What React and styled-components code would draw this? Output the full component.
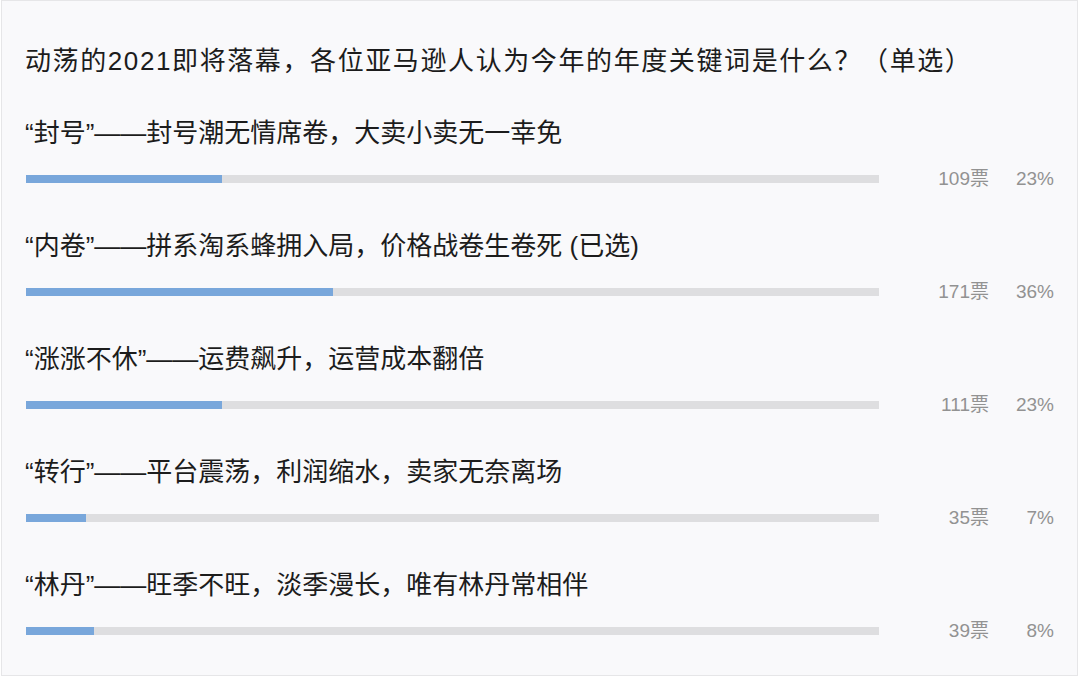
import React from "react";
import styled, { createGlobalStyle } from "styled-components";

const GlobalStyle = createGlobalStyle`
  html, body {
    margin: 0;
    padding: 0;
    background: #ffffff;
  }
  body {
    font-family: "Liberation Sans", "Noto Sans CJK SC", sans-serif;
  }
`;

const Panel = styled.div`
  box-sizing: border-box;
  width: 1077px;
  height: 676px;
  margin-left: 1px;
  border: 1px solid #e6e6e8;
  background: #f9f9fb;
  padding: 40px 0 0 23px;
`;

const Title = styled.h1`
  margin: 0;
  font-size: 26px;
  font-weight: 400;
  line-height: 40px;
  letter-spacing: 1.6px;
  color: #1c1c1c;
  white-space: nowrap;
`;

const OptionList = styled.ul`
  list-style: none;
  margin: 32px 0 0;
  padding: 0;
  display: flex;
  flex-direction: column;
  gap: 35px;
`;

const Option = styled.li`
  display: flex;
  flex-direction: column;
  gap: 14px;
`;

const Label = styled.div`
  font-size: 26px;
  line-height: 40px;
  color: #1c1c1c;
  white-space: nowrap;
`;

const StatRow = styled.div`
  display: flex;
  align-items: center;
  height: 24px;
`;

const Track = styled.div`
  width: 853px;
  height: 8px;
  margin-left: 1px;
  background: #dedee0;
  overflow: hidden;
`;

const Fill = styled.div`
  height: 100%;
  background: #79a7db;
`;

const Stat = styled.span`
  width: ${(p) => p.$w}px;
  text-align: right;
  font-size: 19px;
  line-height: 24px;
  color: #929292;
  white-space: nowrap;
`;

const options = [
  { label: "“封号”——封号潮无情席卷，大卖小卖无一幸免", votes: 109, pct: 23 },
  { label: "“内卷”——拼系淘系蜂拥入局，价格战卷生卷死 (已选)", votes: 171, pct: 36 },
  { label: "“涨涨不休”——运费飙升，运营成本翻倍", votes: 111, pct: 23 },
  { label: "“转行”——平台震荡，利润缩水，卖家无奈离场", votes: 35, pct: 7 },
  { label: "“林丹”——旺季不旺，淡季漫长，唯有林丹常相伴", votes: 39, pct: 8 },
];

export default function App() {
  return (
    <>
      <GlobalStyle />
      <Panel>
        <Title>动荡的2021即将落幕，各位亚马逊人认为今年的年度关键词是什么？（单选）</Title>
        <OptionList>
          {options.map((o) => (
            <Option key={o.label}>
              <Label>{o.label}</Label>
              <StatRow>
                <Track>
                  <Fill style={{ width: `${o.pct}%` }} />
                </Track>
                <Stat $w={110}>{o.votes}票</Stat>
                <Stat $w={65}>{o.pct}%</Stat>
              </StatRow>
            </Option>
          ))}
        </OptionList>
      </Panel>
    </>
  );
}
